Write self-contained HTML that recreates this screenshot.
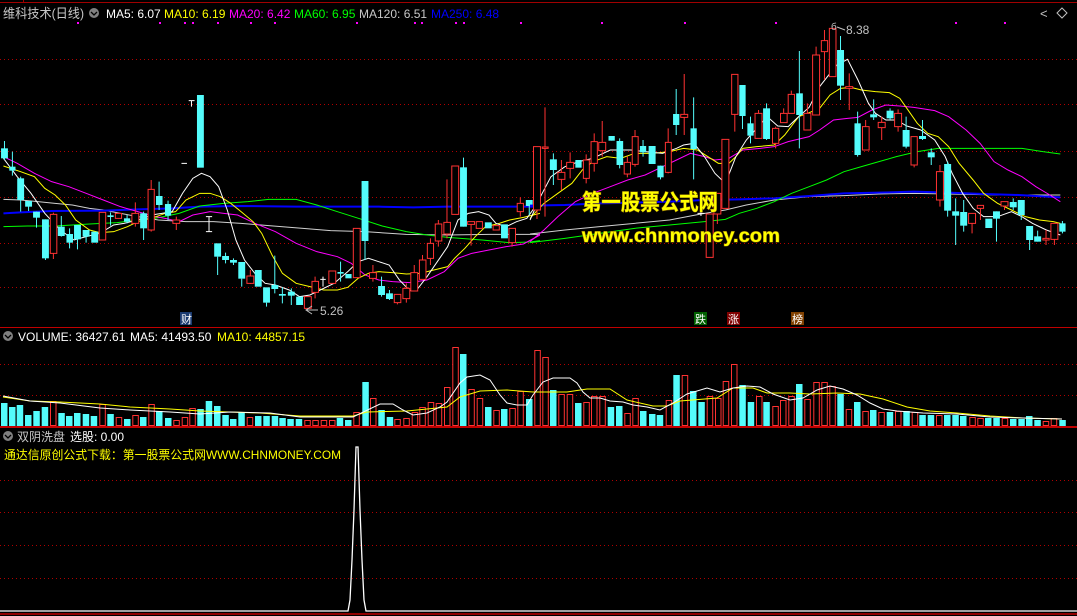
<!DOCTYPE html>
<html><head><meta charset="utf-8"><style>
html,body{margin:0;padding:0;background:#000;width:1077px;height:616px;overflow:hidden}
svg{display:block}
text{font-family:"Liberation Sans","Noto Sans CJK SC",sans-serif}
.c{fill:#54fcfc;stroke:none}
.r{fill:#000;stroke:#ff3232;stroke-width:1}
.cw{stroke:#54fcfc;stroke-width:1;fill:none}
.rw{stroke:#ff3232;stroke-width:1;fill:none}
.ns{vector-effect:non-scaling-stroke}
.g{stroke:#b00000;stroke-width:1;stroke-dasharray:1 3}
</style></head><body>
<svg width="1077" height="616" viewBox="0 0 1077 616" xmlns="http://www.w3.org/2000/svg">
<rect width="1077" height="616" fill="#000"/>
<line x1="0" y1="2.5" x2="1077" y2="2.5" stroke="#a00000"/>
<line x1="23.5" y1="0" x2="23.5" y2="3" stroke="#a00000"/>
<!-- grid -->
<g class="g">
<line x1="0" y1="59.5" x2="1077" y2="59.5"/><line x1="0" y1="104.5" x2="1077" y2="104.5"/>
<line x1="0" y1="151.5" x2="1077" y2="151.5"/><line x1="0" y1="197.5" x2="1077" y2="197.5"/>
<line x1="0" y1="243.5" x2="1077" y2="243.5"/><line x1="0" y1="287.5" x2="1077" y2="287.5"/>
<line x1="0" y1="364.5" x2="1077" y2="364.5"/><line x1="0" y1="395.5" x2="1077" y2="395.5"/>
<line x1="0" y1="480.5" x2="1077" y2="480.5"/><line x1="0" y1="512.5" x2="1077" y2="512.5"/>
<line x1="0" y1="545.5" x2="1077" y2="545.5"/><line x1="0" y1="578.5" x2="1077" y2="578.5"/>
</g>
<!-- magenta dots -->
<g fill="#ff00ff">
<rect x="77" y="22" width="2" height="2"/><rect x="159" y="22" width="2" height="2"/><rect x="184" y="22" width="2" height="2"/><rect x="192" y="22" width="2" height="2"/><rect x="217" y="22" width="2" height="2"/><rect x="250" y="22" width="2" height="2"/><rect x="274" y="22" width="2" height="2"/><rect x="356" y="22" width="2" height="2"/><rect x="414" y="22" width="2" height="2"/><rect x="421" y="22" width="2" height="2"/><rect x="455" y="22" width="2" height="2"/><rect x="463" y="22" width="2" height="2"/><rect x="520" y="22" width="2" height="2"/><rect x="601" y="22" width="2" height="2"/><rect x="684" y="22" width="2" height="2"/><rect x="775" y="22" width="2" height="2"/><rect x="955" y="22" width="2" height="2"/><rect x="1004" y="22" width="2" height="2"/>
</g>

<!-- GROUP A -->
<g transform="translate(0,80) scale(0.34435,0.33333)">
<g fill="none" stroke-width="1" class="ns">
<polyline class="ns" stroke="#d0d0d0" points="10,358 60,360 110,365 160,370 210,375 260,385 300,390 350,400 400,410 460,420 540,425 620,425 700,430 780,437 880,445 960,452 1060,455 1180,463 1300,465 1420,463 1568,463"/>
<polyline class="ns" stroke="#0000ff" stroke-width="2" points="10,400 60,397 150,393 300,392 400,388 500,385 580,380 700,378 860,380 1000,380 1100,380 1200,382 1300,380 1450,380 1568,380"/>
<polyline class="ns" stroke="#00ff00" points="10,440 80,438 160,438 260,432 340,428 400,420 450,415 520,400 580,378 650,370 720,365 780,358 860,358 920,375 980,395 1050,418 1110,438 1180,455 1240,465 1300,472 1400,480 1480,488 1540,486 1568,482"/>
<polyline class="ns" stroke="#ff00ff" points="10,230 50,250 100,280 150,305 200,320 250,340 300,360 350,380 400,395 450,410 480,415 520,425 560,405 610,395 650,400 690,405 740,430 800,455 860,490 920,515 980,530 1020,550 1060,585 1100,600 1140,605 1190,608 1240,600 1290,575 1330,535 1370,520 1420,510 1470,500 1520,492 1568,465"/>
<polyline class="ns" stroke="#ffff00" points="10,258 60,275 100,290 130,325 160,345 190,375 220,420 260,450 290,458 330,455 370,440 400,425 440,415 480,400 510,395 540,360 580,340 610,340 640,350 670,370 700,395 735,425 760,460 790,525 820,580 860,610 900,620 940,630 980,630 1010,622 1040,595 1070,580 1100,575 1140,578 1180,582 1220,580 1260,570 1300,560 1320,535 1350,505 1380,470 1410,440 1450,430 1480,420 1520,412 1568,400"/>
<polyline class="ns" stroke="#ffffff" points="10,235 50,290 90,340 130,400 175,450 215,480 250,470 290,460 330,435 360,430 400,420 440,405 470,400 500,395 530,340 560,295 585,280 610,290 635,320 660,390 685,480 710,540 740,580 770,610 800,615 840,630 870,650 900,645 930,630 970,610 1010,575 1040,545 1070,535 1100,545 1130,555 1160,600 1190,632 1210,630 1240,590 1270,545 1300,500 1330,420 1360,400 1390,395 1420,405 1440,430 1470,440 1500,425 1530,415 1568,360"/>
</g>
<path class="cw ns" d="M13 183V240M36 215V287M60 290V395M83 363V393M106 395V443M132 418V540M178 408V470M202 445V505M225 435V508M250 450V488M321 397V437M369 405V430M417 395V480M462 305V390M488 362V420M632 530V585M655 518V550M678 535V555M702 596V620M774 668V680M798 527V640M820 622V670M846 625V675M989 545V605M1060 483V540M1108 590V650M1131 630V660M1346 233V440M1537 378V405"/>
<g class="c">
<rect x="3" y="205" width="20" height="30"/><rect x="27" y="260" width="18" height="12"/><rect x="50" y="295" width="20" height="65"/><rect x="73" y="363" width="20" height="17"/><rect x="96" y="395" width="20" height="18"/><rect x="122" y="418" width="20" height="117"/><rect x="168" y="440" width="20" height="28"/><rect x="193" y="462" width="19" height="26"/><rect x="215" y="435" width="20" height="43"/><rect x="240" y="450" width="20" height="20"/><rect x="265" y="455" width="20" height="33"/><rect x="312" y="406" width="18" height="5"/><rect x="360" y="415" width="18" height="10"/><rect x="407" y="400" width="20" height="45"/><rect x="453" y="348" width="19" height="27"/><rect x="479" y="372" width="18" height="35"/><rect x="572" y="45" width="20" height="218"/><rect x="622" y="490" width="20" height="40"/><rect x="645" y="528" width="20" height="12"/><rect x="668" y="540" width="20" height="8"/><rect x="692" y="546" width="20" height="50"/><rect x="740" y="570" width="20" height="50"/><rect x="764" y="622" width="20" height="46"/><rect x="788" y="615" width="20" height="12"/><rect x="810" y="642" width="20" height="5"/><rect x="836" y="635" width="20" height="12"/><rect x="860" y="650" width="20" height="25"/><rect x="980" y="576" width="18" height="5"/><rect x="1003" y="582" width="18" height="13"/><rect x="1050" y="303" width="20" height="180"/><rect x="1098" y="618" width="20" height="27"/><rect x="1121" y="640" width="20" height="17"/><rect x="1336" y="262" width="20" height="178"/><rect x="1408" y="427" width="20" height="18"/><rect x="1455" y="433" width="20" height="42"/><rect x="1527" y="360" width="20" height="18"/>
</g>
<path class="rw ns" d="M155 398V403M155 520V537M393 367V400M393 430V440M439 300V328M439 450V455M512 410V420M512 430V450M727 570V588M727 610V612M915 590V604M915 637V655M1083 555V578M1083 595V605M1154 668V673M1180 610V625M1180 656V668M1203 555V578M1227 525V540M1250 475V490M1250 535V555M1273 420V432M1273 483V500M1298 298V427M1298 462V475M1368 433V497M1487 488V500M1511 352V370M1511 395V410"/>
<g class="r ns">
<rect class="ns" x="146" y="403" width="19" height="117"/><rect class="ns" x="288" y="397" width="19" height="83"/><rect class="ns" x="335" y="400" width="18" height="15"/><rect class="ns" x="383" y="400" width="20" height="30"/><rect class="ns" x="430" y="328" width="18" height="122"/><rect class="ns" x="502" y="420" width="20" height="10"/><rect class="ns" x="717" y="588" width="20" height="22"/><rect class="ns" x="884" y="650" width="20" height="35"/><rect class="ns" x="906" y="604" width="19" height="33"/><rect class="ns" x="955" y="573" width="20" height="37"/><rect class="ns" x="1026" y="445" width="20" height="148"/><rect class="ns" x="1073" y="578" width="20" height="17"/><rect class="ns" x="1145" y="643" width="19" height="25"/><rect class="ns" x="1170" y="625" width="20" height="31"/><rect class="ns" x="1193" y="578" width="20" height="55"/><rect class="ns" x="1218" y="540" width="19" height="58"/><rect class="ns" x="1241" y="490" width="18" height="45"/><rect class="ns" x="1264" y="432" width="19" height="51"/><rect class="ns" x="1289" y="427" width="19" height="35"/><rect class="ns" x="1312" y="258" width="20" height="145"/><rect class="ns" x="1358" y="425" width="20" height="8"/><rect class="ns" x="1383" y="425" width="18" height="20"/><rect class="ns" x="1432" y="437" width="18" height="13"/><rect class="ns" x="1478" y="445" width="19" height="43"/><rect class="ns" x="1502" y="370" width="18" height="25"/>
</g>
<path class="ns" stroke="#fff" fill="none" d="M548 62H565M556 62V80M527 250H543M598 410H616M598 455H616M607 410V455M930 598H946M938 590V620"/>
</g>

<!-- GROUP B -->
<g transform="translate(530,20) scale(0.34890,0.33333)">
<g fill="none">
<polyline class="ns" stroke="#d0d0d0" points="0,642 100,630 200,620 300,610 400,600 490,582 560,570 620,555 700,540 800,530 900,527 1000,522 1100,520 1200,522 1350,525 1520,525"/>
<polyline class="ns" stroke="#0000ff" stroke-width="2" points="0,557 100,555 200,550 300,548 400,545 500,540 600,538 700,535 800,528 900,520 1000,518 1100,515 1200,518 1300,522 1400,525 1520,532"/>
<polyline class="ns" stroke="#00ff00" points="0,668 100,655 200,640 300,625 400,615 500,605 560,598 600,580 650,565 700,545 750,520 800,500 850,480 900,455 950,440 1000,425 1050,410 1110,395 1170,385 1250,385 1330,385 1410,385 1470,395 1520,402"/>
<polyline class="ns" stroke="#ff00ff" points="0,665 40,630 80,590 130,545 180,520 230,500 280,480 330,465 380,440 420,420 460,400 500,410 530,420 570,415 610,390 660,385 700,380 740,365 800,350 830,330 870,300 910,295 940,292 980,270 1020,255 1060,258 1100,262 1160,272 1200,290 1250,330 1290,370 1330,425 1370,450 1410,470 1450,500 1490,525 1520,545"/>
<polyline class="ns" stroke="#ffff00" points="0,595 40,550 80,520 120,490 150,450 180,425 220,410 260,415 300,400 350,400 400,395 440,385 480,390 510,410 540,430 570,430 590,410 610,385 650,380 700,375 730,345 770,290 800,278 830,265 860,225 890,205 920,202 950,210 990,215 1030,218 1060,235 1080,265 1110,310 1140,340 1170,350 1200,380 1230,430 1270,480 1300,520 1340,550 1380,570 1420,590 1460,600 1500,605 1520,610"/>
<polyline class="ns" stroke="#ffffff" points="0,600 30,530 60,470 100,440 140,425 180,415 230,390 290,390 330,395 380,400 420,385 440,375 470,370 500,410 530,460 560,490 590,410 620,360 650,325 680,290 710,318 740,320 770,290 800,262 830,200 860,160 880,135 910,118 940,180 970,250 990,280 1020,300 1050,300 1080,318 1120,330 1160,360 1190,410 1210,460 1240,520 1270,565 1300,590 1340,590 1380,575 1410,590 1440,610 1480,630 1520,645"/>
</g>
<path class="cw ns" d="M67 400V495M234 348V362M257 355V445M324 360V410M374 437V478M419 207V345M469 232V478M609 288V327M632 290V370M678 250V360M772 93V385M890 48V240M939 275V410M985 238V300M1032 265V300M1078 290V385M1125 300V360M1150 385V435M1197 425V590M1220 535V675M1243 540V635M1337 574V665M1385 535V570M1408 585V600M1432 660V690M1455 632V665M1526 603V640"/>
<g class="c">
<rect x="57" y="418" width="20" height="32"/><rect x="130" y="420" width="18" height="23"/><rect x="225" y="348" width="18" height="14"/><rect x="248" y="363" width="19" height="72"/><rect x="315" y="378" width="18" height="19"/><rect x="340" y="378" width="20" height="54"/><rect x="365" y="437" width="18" height="35"/><rect x="410" y="282" width="18" height="33"/><rect x="460" y="325" width="18" height="62"/><rect x="600" y="195" width="18" height="93"/><rect x="623" y="310" width="18" height="37"/><rect x="668" y="265" width="20" height="92"/><rect x="763" y="220" width="19" height="65"/><rect x="880" y="90" width="20" height="107"/><rect x="930" y="310" width="18" height="95"/><rect x="975" y="283" width="20" height="9"/><rect x="1022" y="272" width="20" height="23"/><rect x="1068" y="330" width="20" height="50"/><rect x="1115" y="348" width="20" height="9"/><rect x="1140" y="397" width="20" height="15"/><rect x="1187" y="432" width="20" height="140"/><rect x="1210" y="574" width="20" height="13"/><rect x="1233" y="576" width="20" height="41"/><rect x="1305" y="596" width="20" height="28"/><rect x="1327" y="574" width="20" height="22"/><rect x="1375" y="546" width="20" height="16"/><rect x="1398" y="540" width="20" height="45"/><rect x="1422" y="618" width="20" height="42"/><rect x="1445" y="649" width="20" height="16"/><rect x="1517" y="610" width="18" height="25"/>
</g>
<path class="rw ns" d="M20 570V597M43 262V590M90 420V457M90 478V510M115 397V427M115 445V475M161 403V420M161 475V490M184 340V365M184 430V455M207 303V367M207 392V410M279 410V427M279 462V472M301 330V350M301 433V440M396 325V367M396 457V460M442 162V283M442 292V345M537 582V612M587 283V335M655 270V280M704 320V325M704 370V385M727 265V280M749 212V223M795 250V280M820 80V105M844 30V62M844 95V180M915 160V200M915 205V270M962 300V320M1008 290V307M1008 323V360M1055 268V280M1055 320V335M1101 435V442M1175 435V455M1175 540V560M1267 610V640M1291 565V600M1360 558V570M1479 630V675M1503 658V675"/>
<g class="r">
<rect class="ns" x="10" y="380" width="20" height="190"/><rect class="ns" x="35" y="381" width="17" height="4"/><rect class="ns" x="80" y="457" width="20" height="21"/><rect class="ns" x="105" y="427" width="20" height="18"/><rect class="ns" x="153" y="420" width="17" height="55"/><rect class="ns" x="175" y="365" width="18" height="65"/><rect class="ns" x="197" y="367" width="20" height="25"/><rect class="ns" x="270" y="427" width="18" height="35"/><rect class="ns" x="293" y="350" width="17" height="83"/><rect class="ns" x="388" y="367" width="17" height="90"/><rect class="ns" x="432" y="283" width="20" height="9"/><rect class="ns" x="505" y="582" width="20" height="130"/><rect class="ns" x="527" y="520" width="20" height="62"/><rect class="ns" x="550" y="358" width="20" height="207"/><rect class="ns" x="578" y="163" width="18" height="120"/><rect class="ns" x="645" y="280" width="20" height="75"/><rect class="ns" x="695" y="325" width="18" height="45"/><rect class="ns" x="718" y="280" width="19" height="28"/><rect class="ns" x="740" y="223" width="18" height="57"/><rect class="ns" x="785" y="280" width="20" height="50"/><rect class="ns" x="810" y="105" width="20" height="180"/><rect class="ns" x="835" y="62" width="18" height="33"/><rect class="ns" x="858" y="25" width="19" height="145"/><rect class="ns" x="905" y="200" width="20" height="5"/><rect class="ns" x="953" y="320" width="19" height="70"/><rect class="ns" x="998" y="307" width="20" height="16"/><rect class="ns" x="1045" y="280" width="20" height="40"/><rect class="ns" x="1092" y="350" width="18" height="85"/><rect class="ns" x="1165" y="455" width="20" height="85"/><rect class="ns" x="1257" y="580" width="20" height="30"/><rect class="ns" x="1282" y="556" width="18" height="9"/><rect class="ns" x="1350" y="545" width="20" height="13"/><rect class="ns" x="1470" y="655" width="18" height="5"/><rect class="ns" x="1493" y="610" width="20" height="48"/>
</g>
<path class="ns" stroke="#fff" fill="none" d="M480 580H500M490 572V588"/>
</g>

<!-- price labels -->
<path d="M312 306L306 310L312 314M306 310H318" stroke="#c0c0c0" fill="none"/>
<text x="320" y="315" font-size="12" fill="#c0c0c0">5.26</text>
<text x="831" y="30" font-size="10" fill="#c0c0c0">б</text>
<path d="M837 27L845 30" stroke="#c0c0c0"/>
<text x="846" y="34" font-size="12" fill="#c0c0c0">8.38</text>

<!-- watermark -->
<g font-weight="bold" fill="#ffff00" stroke="#806000" stroke-width="1" paint-order="stroke">
<text x="582" y="210" font-size="22" textLength="136" lengthAdjust="spacingAndGlyphs">第一股票公式网</text>
<text x="582" y="242" font-size="19" textLength="198" lengthAdjust="spacingAndGlyphs">www.chnmoney.com</text>
</g>

<!-- tags -->
<rect x="180" y="312" width="12" height="13" fill="#1a3a70"/><text x="181" y="323" font-size="11" fill="#ffffff">财</text>
<rect x="694" y="312" width="13" height="13" fill="#006000"/><text x="695" y="323" font-size="11" fill="#ffffff">跌</text>
<rect x="727" y="312" width="13" height="13" fill="#800000"/><text x="728" y="323" font-size="11" fill="#ffffff">涨</text>
<rect x="791" y="312" width="13" height="13" fill="#804000"/><text x="792" y="323" font-size="11" fill="#ffffff">榜</text>

<!-- header -->
<text x="3" y="18" font-size="13" fill="#c8c8c8" textLength="81" lengthAdjust="spacingAndGlyphs">维科技术(日线)</text>
<circle cx="94" cy="13" r="5" fill="#808080"/><path d="M91 12L94 15L97 12" stroke="#000" fill="none" stroke-width="1.3"/>
<g font-size="12">
<text x="106" y="18" fill="#ffffff">MA5: 6.07</text>
<text x="164" y="18" fill="#ffff00">MA10: 6.19</text>
<text x="229" y="18" fill="#ff00ff">MA20: 6.42</text>
<text x="294" y="18" fill="#00ff00">MA60: 6.95</text>
<text x="359" y="18" fill="#c8c8c8">MA120: 6.51</text>
<text x="431" y="18" fill="#0000ff">MA250: 6.48</text>
</g>
<text x="1040" y="18" font-size="13" fill="#c0c0c0">&lt;</text>
<path d="M1062 8L1067 13L1062 18L1057 13Z" stroke="#c0c0c0" fill="none"/>

<!-- separators -->
<line x1="0" y1="327.5" x2="1077" y2="327.5" stroke="#c00000"/>
<line x1="0" y1="427.5" x2="1077" y2="427.5" stroke="#c00000"/>

<!-- volume header -->
<circle cx="8" cy="336" r="5" fill="#808080"/><path d="M5 335L8 338L11 335" stroke="#000" fill="none" stroke-width="1.3"/>
<g font-size="12">
<text x="18" y="341" fill="#ffffff">VOLUME: 36427.61</text>
<text x="130" y="341" fill="#ffffff">MA5: 41493.50</text>
<text x="217" y="341" fill="#ffff00">MA10: 44857.15</text>
</g>

<!-- volume bars -->
<g class="c">
<rect x="1" y="403" width="6.5" height="23"/><rect x="9" y="407" width="6.5" height="19"/><rect x="16.7" y="405" width="6.5" height="21"/><rect x="25" y="415" width="6.5" height="11"/><rect x="33.3" y="411" width="6.5" height="15"/><rect x="41.7" y="407" width="6.5" height="19"/><rect x="58.3" y="413" width="6.5" height="13"/><rect x="66" y="416" width="6.5" height="10"/><rect x="74" y="413" width="6.5" height="13"/><rect x="82.7" y="414" width="6.5" height="12"/><rect x="90.7" y="416" width="6.5" height="10"/><rect x="107.3" y="414" width="6.5" height="12"/><rect x="124" y="419" width="6.5" height="7"/><rect x="140" y="417" width="6.5" height="9"/><rect x="156" y="411" width="6.5" height="15"/><rect x="165" y="418" width="6.5" height="8"/><rect x="197.3" y="409" width="6.5" height="17"/><rect x="205.7" y="401" width="6.5" height="25"/><rect x="214" y="406" width="6.5" height="20"/><rect x="222.3" y="415" width="6.5" height="11"/><rect x="230" y="419" width="6.5" height="7"/><rect x="238.3" y="412" width="6.5" height="14"/><rect x="255" y="416" width="6.5" height="10"/><rect x="263.3" y="416" width="6.5" height="10"/><rect x="271.7" y="416" width="6.5" height="10"/><rect x="279.3" y="418" width="6.5" height="8"/><rect x="287.3" y="419" width="6.5" height="7"/><rect x="295.7" y="419" width="6.5" height="7"/><rect x="336.7" y="418" width="6.5" height="8"/><rect x="345" y="420" width="6.5" height="6"/><rect x="362.3" y="382" width="6.5" height="44"/><rect x="378.3" y="410" width="6.5" height="16"/><rect x="386.7" y="417" width="6.5" height="9"/>
<rect x="460" y="354" width="6.5" height="72"/><rect x="485" y="407" width="6.5" height="19"/><rect x="501" y="409" width="6.5" height="17"/><rect x="526" y="399" width="6.5" height="27"/><rect x="550" y="390" width="6.5" height="36"/><rect x="575" y="403" width="6.5" height="23"/><rect x="607.7" y="407" width="6.5" height="19"/><rect x="616" y="406" width="6.5" height="20"/><rect x="640" y="411" width="6.5" height="15"/><rect x="649" y="414" width="6.5" height="12"/><rect x="656.7" y="415" width="6.5" height="11"/><rect x="673.3" y="375" width="6.5" height="51"/><rect x="690" y="391" width="6.5" height="35"/><rect x="698.3" y="402" width="6.5" height="24"/><rect x="739.3" y="385" width="6.5" height="41"/><rect x="747.7" y="402" width="6.5" height="24"/><rect x="763.3" y="402" width="6.5" height="24"/>
<rect x="796" y="384" width="6.5" height="42"/><rect x="837.3" y="394" width="6.5" height="32"/><rect x="854" y="402" width="6.5" height="24"/><rect x="870" y="410" width="6.5" height="16"/><rect x="886.7" y="412" width="6.5" height="14"/><rect x="903.3" y="411" width="6.5" height="15"/><rect x="919.3" y="415" width="6.5" height="11"/><rect x="927.7" y="415" width="6.5" height="11"/><rect x="944" y="415" width="6.5" height="11"/><rect x="952.3" y="415" width="6.5" height="11"/><rect x="960" y="416" width="6.5" height="10"/><rect x="985" y="418" width="6.5" height="8"/><rect x="993.3" y="418" width="6.5" height="8"/><rect x="1010" y="419" width="6.5" height="7"/><rect x="1018.3" y="419" width="6.5" height="7"/><rect x="1026" y="416" width="6.5" height="10"/><rect x="1034.3" y="420" width="6.5" height="6"/><rect x="1059.3" y="420" width="6.5" height="6"/>
</g>
<g class="r">
<rect x="50.5" y="401.5" width="5.5" height="24"/><rect x="99.8" y="404.5" width="5.5" height="21"/><rect x="116.2" y="417.5" width="5.5" height="8"/><rect x="132.8" y="415.5" width="5.5" height="10"/><rect x="148.8" y="404.5" width="5.5" height="21"/><rect x="173.8" y="420.5" width="5.5" height="5"/><rect x="182.2" y="417.5" width="5.5" height="8"/><rect x="189.8" y="408.5" width="5.5" height="17"/><rect x="247.2" y="417.5" width="5.5" height="8"/><rect x="304.8" y="420.5" width="5.5" height="5"/><rect x="312.8" y="420.5" width="5.5" height="5"/><rect x="321.2" y="420.5" width="5.5" height="5"/><rect x="329.5" y="420.5" width="5.5" height="5"/><rect x="353.8" y="412.5" width="5.5" height="13"/><rect x="370.5" y="398.5" width="5.5" height="27"/><rect x="394.8" y="419.5" width="5.5" height="6"/>
<rect x="403.8" y="418.5" width="5.5" height="7"/><rect x="412.2" y="412.5" width="5.5" height="13"/><rect x="419.8" y="407.5" width="5.5" height="18"/><rect x="428.2" y="402.5" width="5.5" height="23"/><rect x="436.2" y="403.5" width="5.5" height="22"/><rect x="444.5" y="387.5" width="5.5" height="38"/><rect x="452.8" y="347.5" width="5.5" height="78"/><rect x="468.8" y="389.5" width="5.5" height="36"/><rect x="477.2" y="398.5" width="5.5" height="27"/><rect x="493.8" y="410.5" width="5.5" height="15"/><rect x="509.8" y="408.5" width="5.5" height="17"/><rect x="517.8" y="391.5" width="5.5" height="34"/><rect x="534.8" y="350.5" width="5.5" height="75"/><rect x="542.8" y="357.5" width="5.5" height="68"/><rect x="558.8" y="394.5" width="5.5" height="31"/><rect x="567.2" y="394.5" width="5.5" height="31"/><rect x="583.8" y="402.5" width="5.5" height="23"/><rect x="591.5" y="396.5" width="5.5" height="29"/><rect x="599.8" y="396.5" width="5.5" height="29"/><rect x="624.8" y="413.5" width="5.5" height="12"/><rect x="632.8" y="398.5" width="5.5" height="27"/><rect x="666.2" y="400.5" width="5.5" height="25"/><rect x="682.2" y="375.5" width="5.5" height="50"/><rect x="707.2" y="396.5" width="5.5" height="29"/><rect x="715.5" y="398.5" width="5.5" height="27"/><rect x="723.2" y="381.5" width="5.5" height="44"/><rect x="731.5" y="364.5" width="5.5" height="61"/><rect x="756.5" y="396.5" width="5.5" height="29"/><rect x="772.8" y="406.5" width="5.5" height="19"/><rect x="780.5" y="400.5" width="5.5" height="25"/><rect x="788.8" y="396.5" width="5.5" height="29"/>
<rect x="804.8" y="399.5" width="5.5" height="26"/><rect x="813.8" y="382.5" width="5.5" height="43"/><rect x="821.8" y="382.5" width="5.5" height="43"/><rect x="829.8" y="386.5" width="5.5" height="39"/><rect x="846.2" y="409.5" width="5.5" height="16"/><rect x="862.8" y="411.5" width="5.5" height="14"/><rect x="878.8" y="412.5" width="5.5" height="13"/><rect x="895.5" y="411.5" width="5.5" height="14"/><rect x="912.2" y="412.5" width="5.5" height="13"/><rect x="936.5" y="415.5" width="5.5" height="10"/><rect x="969.8" y="417.5" width="5.5" height="8"/><rect x="977.8" y="418.5" width="5.5" height="7"/><rect x="1002.2" y="418.5" width="5.5" height="7"/><rect x="1043.2" y="421.5" width="5.5" height="4"/><rect x="1051.2" y="418.5" width="5.5" height="7"/>
</g>
<polyline fill="none" stroke="#ffff00" points="3,397 30,401 60,402 100,404 130,407 170,409 200,411 260,413 300,416 353,416 367,412 407,411 447,407 460,397 480,391 507,390 533,392 567,392 587,389 610,389 627,400 653,406 667,406 680,401 717,398 733,388 753,388 767,393 790,393 810,394 837,393 860,394 883,399 907,407 930,411 957,413 990,416 1023,418 1062,419"/>
<polyline fill="none" stroke="#ffffff" points="3,396 30,401 60,403 100,408 130,410 170,412 200,414 230,412 270,413 300,417 353,417 380,404 393,404 403,410 413,415 427,413 440,407 447,402 460,383 467,377 480,375 490,380 500,395 507,403 517,405 527,405 533,395 543,382 553,378 570,378 577,383 583,392 590,398 600,398 610,401 623,402 633,405 647,407 660,410 673,403 687,394 707,388 720,392 733,388 747,386 760,387 773,394 790,400 803,398 817,390 830,386 843,389 857,395 870,403 883,409 897,411 923,413 957,414 990,417 1023,418 1062,419"/>
<line x1="0" y1="426.5" x2="1077" y2="426.5" stroke="#c00000"/>

<!-- bottom panel -->
<circle cx="8" cy="436" r="5" fill="#808080"/><path d="M5 435L8 438L11 435" stroke="#000" fill="none" stroke-width="1.3"/>
<text x="17" y="441" font-size="12" fill="#c8c8c8">双阴洗盘</text>
<text x="70" y="441" font-size="12" fill="#ffffff">选股: 0.00</text>
<text x="4" y="459" font-size="12" fill="#ffff00" textLength="337" lengthAdjust="spacingAndGlyphs">通达信原创公式下载：第一股票公式网WWW.CHNMONEY.COM</text>
<polyline fill="none" stroke="#ffffff" stroke-width="1.3" points="0,611 348,611 350,600 352,560 354,510 356,447 358,447 360,510 362,560 364,600 366,611 1077,611"/>
<line x1="0" y1="614" x2="1077" y2="614" stroke="#c00000" stroke-width="1.5"/>
</svg>
</body></html>
